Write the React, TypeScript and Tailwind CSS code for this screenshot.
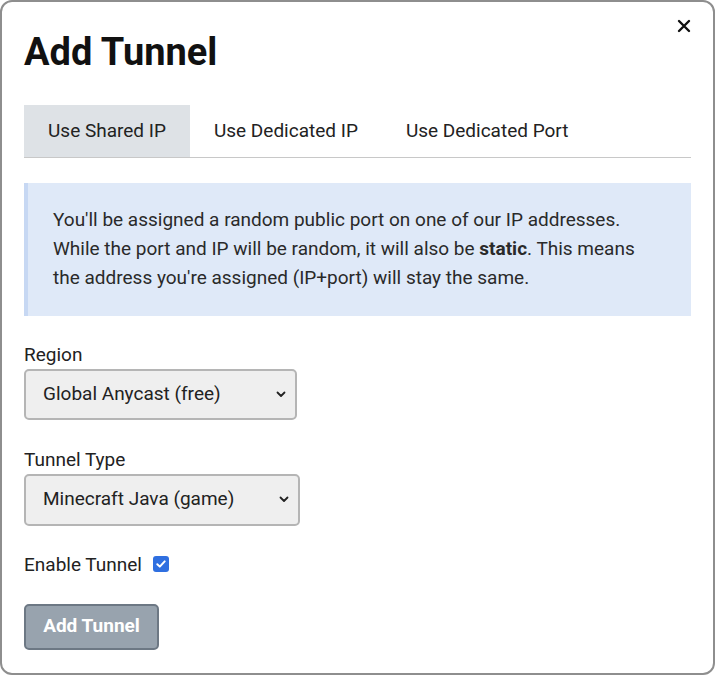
import { useState } from "react";

const tabs = ["Use Shared IP", "Use Dedicated IP", "Use Dedicated Port"];

function Chevron() {
  return (
    <svg width="10" height="7" viewBox="0 0 10 7" className="shrink-0">
      <path d="M1.5 1.5 L5 5 L8.5 1.5" fill="none" stroke="#222" strokeWidth="1.8" strokeLinecap="round" strokeLinejoin="round" />
    </svg>
  );
}

function FakeSelect({ value, width }: { value: string; width: string }) {
  return (
    <div
      className={`${width} flex items-center justify-between rounded-[5px] border-2 border-[#b5b5b5] bg-[#efefef] pl-[17px] pr-[9px] text-[19px] text-[#222]`}
    >
      <span>{value}</span>
      <Chevron />
    </div>
  );
}

export default function App() {
  const [active, setActive] = useState(0);
  const [enabled, setEnabled] = useState(true);

  return (
    <div
      className="relative h-[675px] w-[715px] overflow-hidden rounded-[12px] border-2 border-[#8e8e8e] bg-white px-[22px] pt-[28px] text-[#222]"
      style={{ fontFamily: "Roboto, 'Liberation Sans', sans-serif" }}
    >
      <button className="absolute right-[22px] top-[17px] text-[#111]" aria-label="Close">
        <svg width="14" height="14" viewBox="0 0 14 14">
          <path d="M2 2 L12 12 M12 2 L2 12" stroke="currentColor" strokeWidth="2.4" strokeLinecap="round" />
        </svg>
      </button>

      <h1 className="text-[38px] font-bold leading-[1.2] text-[#111]">Add Tunnel</h1>

      <div className="mt-[29px] flex border-b border-[#c8c8c8]">
        {tabs.map((t, i) => (
          <button
            key={t}
            onClick={() => setActive(i)}
            className={`h-[52px] px-[24px] text-[19px] leading-[28px] text-[#222] ${
              active === i ? "bg-[#dee2e6]" : "bg-transparent"
            }`}
          >
            {t}
          </button>
        ))}
      </div>

      <div className="mt-[25px] border-l-[4px] border-[#c7d8f3] bg-[#dfe9f8] pb-[24px] pl-[25px] pr-[20px] pt-[22px] text-[19px] leading-[29px] text-[#2a2a2a]">
        You'll be assigned a random public port on one of our IP addresses.
        <br />
        While the port and IP will be random, it will also be <b>static</b>. This means
        <br />
        the address you're assigned (IP+port) will stay the same.
      </div>

      <div className="mt-[24px] text-[19px] leading-[29px]">Region</div>
      <FakeSelect value="Global Anycast (free)" width="w-[273px] h-[51px]" />

      <div className="mt-[25px] text-[19px] leading-[29px]">Tunnel Type</div>
      <FakeSelect value="Minecraft Java (game)" width="w-[276px] h-[52px]" />

      <label className="mt-[24px] flex items-center gap-[11px] text-[19px] leading-[29px]">
        Enable Tunnel
        <span
          onClick={() => setEnabled(!enabled)}
          className={`flex h-[16px] w-[16px] items-center justify-center rounded-[3px] ${
            enabled ? "bg-[#2f6fe0]" : "border border-[#777] bg-white"
          }`}
        >
          {enabled && (
            <svg width="12" height="12" viewBox="0 0 12 12">
              <path d="M2.3 6.2 L4.8 8.6 L9.7 3.4" fill="none" stroke="white" strokeWidth="2" strokeLinecap="round" strokeLinejoin="round" />
            </svg>
          )}
        </span>
      </label>

      <button className="mt-[25px] h-[46px] w-[135px] rounded-[5px] border-2 border-[#6d7884] bg-[#98a3ae] text-[19px] font-bold text-white">
        Add Tunnel
      </button>
    </div>
  );
}
